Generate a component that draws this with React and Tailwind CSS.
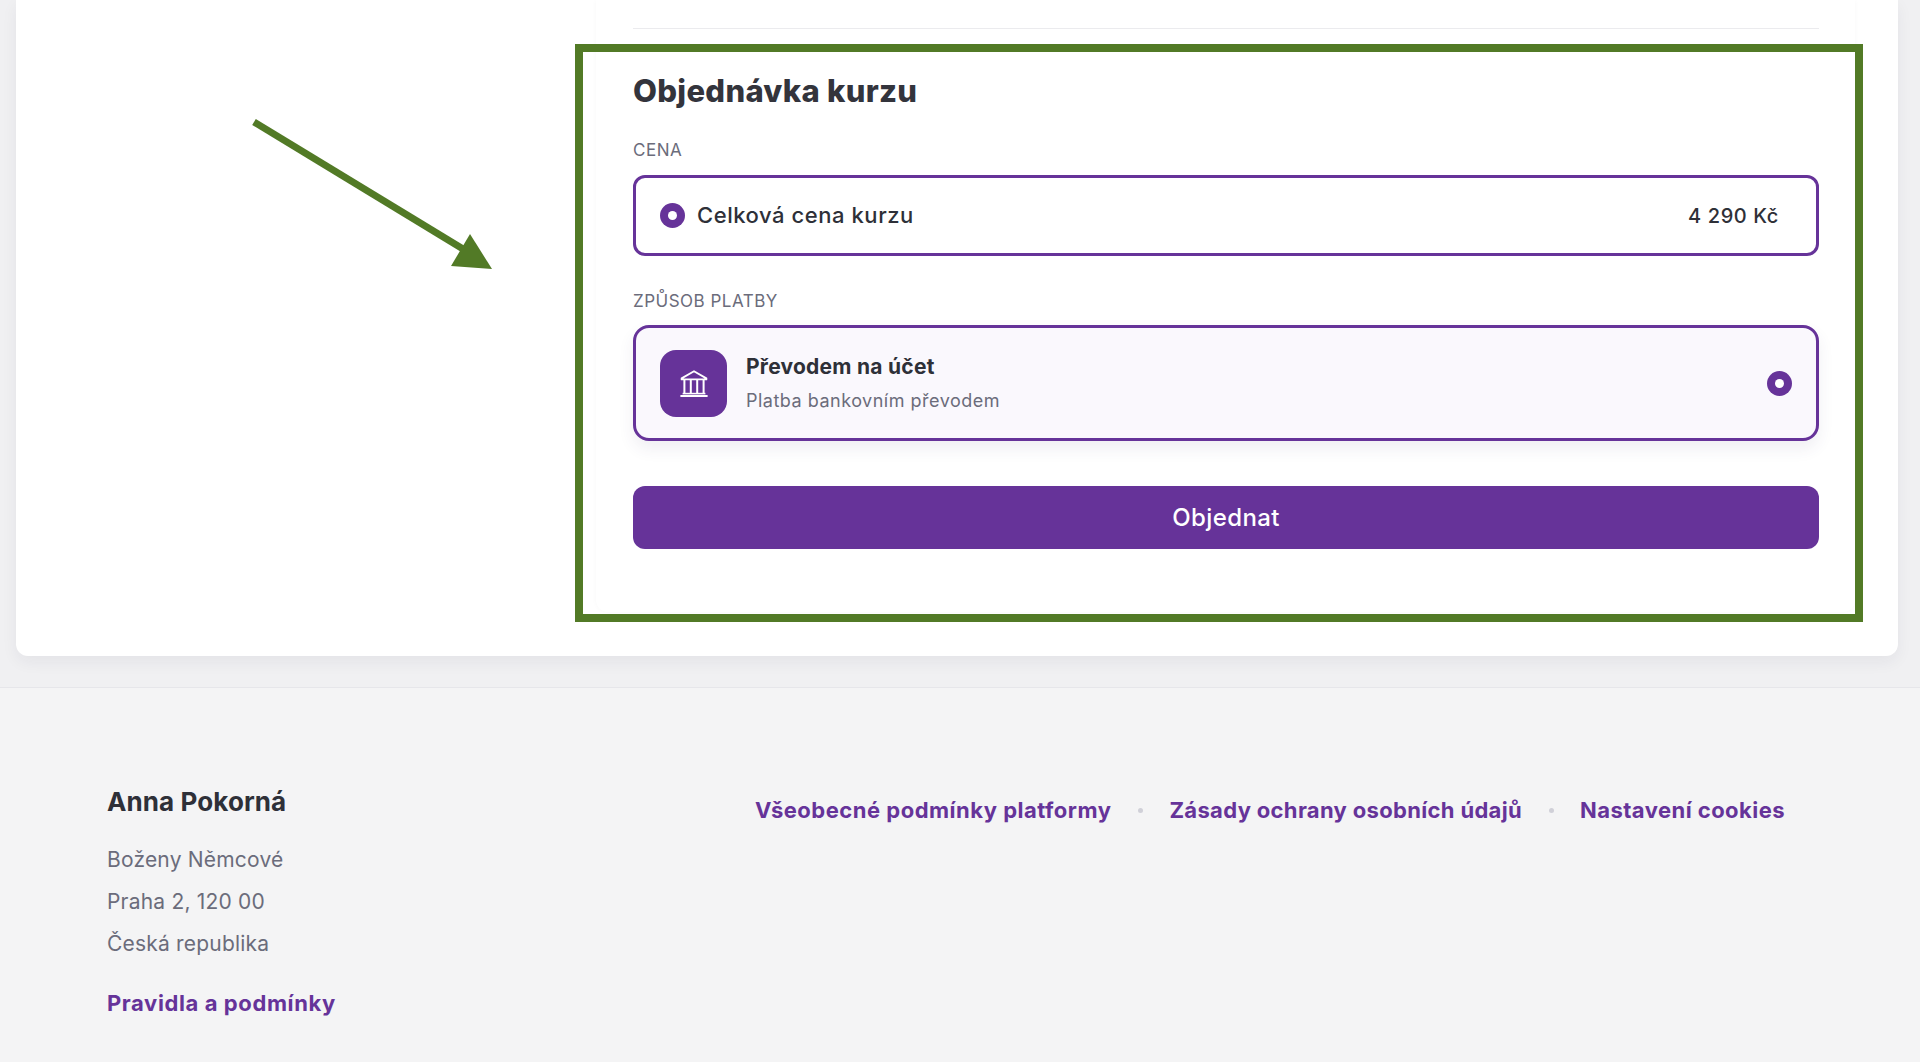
import React from "react";

function Radio({ className = "" }) {
  return (
    <span className={"flex h-[25px] w-[25px] shrink-0 items-center justify-center rounded-full bg-[#663399] " + className}>
      <span className="block h-[9px] w-[9px] rounded-full bg-white" />
    </span>
  );
}

function BankIcon() {
  return (
    <svg width="28" height="27" viewBox="0 0 28 27" fill="none" stroke="#fff" strokeWidth="1.8">
      <path d="M14 1.2 L26.4 8.4 V9.4 H1.6 V8.4 Z" strokeLinejoin="round" />
      <path d="M4.4 10 V23 M10.8 10 V23 M17.2 10 V23 M23.6 10 V23" strokeWidth="2" />
      <path d="M2.6 23.6 H25.4" strokeWidth="1.6" />
      <path d="M0.4 26 H27.6" strokeWidth="2" />
    </svg>
  );
}

export default function App() {
  return (
    <div className="relative h-[1062px] overflow-hidden bg-[#f0f0f2] font-['Inter','Noto_Sans',sans-serif] text-[#2e3038]">
      <main className="ml-4 mr-[22px] flex h-[656px] justify-end rounded-b-xl bg-white pr-[43px] pb-11 shadow-[0_6px_16px_rgba(40,40,60,0.06)]">
        <section className="h-[612px] w-[1259px] rounded-b-xl bg-white pr-[36px] pl-[37px] shadow-[0_0_5px_rgba(40,40,60,0.03)]">
          <div className="pt-[28px]">
            <div className="h-px bg-[#ebebee]" />
          </div>
          <h2 className="mt-[43px] text-[31px] leading-[38px] font-extrabold tracking-[0.3px] text-[#33343c]">Objednávka kurzu</h2>

          <p className="mt-[29px] text-[17px] leading-[22px] tracking-[0.5px] text-[#6b6c7b]">CENA</p>
          <div className="mt-[14px] flex h-[81px] items-center rounded-xl border-[3px] border-[#663399] pr-[37px] pl-[24px]">
            <Radio />
            <span className="ml-[12px] flex-1 text-[22px] font-medium tracking-[0.55px]">Celková cena kurzu</span>
            <span className="text-[20px] font-medium tracking-[0.6px]">4 290 Kč</span>
          </div>

          <p className="mt-[34px] text-[17px] leading-[22px] tracking-[0.5px] text-[#6b6c7b]">ZPŮSOB PLATBY</p>
          <div className="mt-[13px] flex h-[116px] items-center rounded-2xl border-[3px] border-[#663399] bg-[#faf8fd] pr-[24px] pl-[24px] shadow-[0_8px_16px_rgba(60,50,100,0.08)]">
            <span className="flex h-[67px] w-[67px] items-center justify-center rounded-2xl bg-[#663399]">
              <BankIcon />
            </span>
            <div className="ml-[19px] flex-1">
              <p className="text-[21px] leading-[28px] font-bold tracking-[0.25px]">Převodem na účet</p>
              <p className="mt-[8px] text-[18px] leading-[24px] tracking-[0.5px] text-[#6b6c7b]">Platba bankovním převodem</p>
            </div>
            <Radio />
          </div>

          <button className="mt-[45px] block h-[63px] w-full rounded-xl bg-[#663399] text-[24px] font-medium tracking-[0.4px] text-white">
            Objednat
          </button>
        </section>
      </main>

      <footer className="mt-[31px] flex h-[375px] border-t border-[#e6e6ea] bg-[#f4f4f5] pl-[107px]">
        <div className="w-[648px] pt-[96px]">
          <p className="text-[26px] leading-[36px] font-bold tracking-[0.1px]">Anna Pokorná</p>
          <div className="mt-[19px] text-[21px] leading-[42px] tracking-[0.2px] text-[#6b6c7b]">
            <p>Boženy Němcové</p>
            <p>Praha 2, 120 00</p>
            <p>Česká republika</p>
          </div>
          <a className="mt-[17px] block text-[22px] leading-[42px] font-bold tracking-[0.6px] text-[#663399]">Pravidla a podmínky</a>
        </div>
        <nav className="flex h-fit items-center gap-[26.5px] pt-[105px] text-[22px] leading-[34px] font-bold text-[#663399]">
          <a className="tracking-[0.5px]">Všeobecné podmínky platformy</a>
          <span className="h-[5px] w-[5px] rounded-full bg-[#d0d0d8]" />
          <a className="tracking-[0.33px]">Zásady ochrany osobních údajů</a>
          <span className="h-[5px] w-[5px] rounded-full bg-[#d0d0d8]" />
          <a className="tracking-[0.45px]">Nastavení cookies</a>
        </nav>
      </footer>

      {/* Annotation overlay */}
      <div className="absolute top-[44px] left-[575px] h-[578px] w-[1288px] border-8 border-[#527a26]" />
      <svg className="absolute top-0 left-0" width="520" height="300" viewBox="0 0 520 300">
        <line x1="254" y1="122" x2="468" y2="252" stroke="#527a26" strokeWidth="7" />
        <polygon points="492,269 470,234 451,266" fill="#527a26" />
      </svg>
    </div>
  );
}
